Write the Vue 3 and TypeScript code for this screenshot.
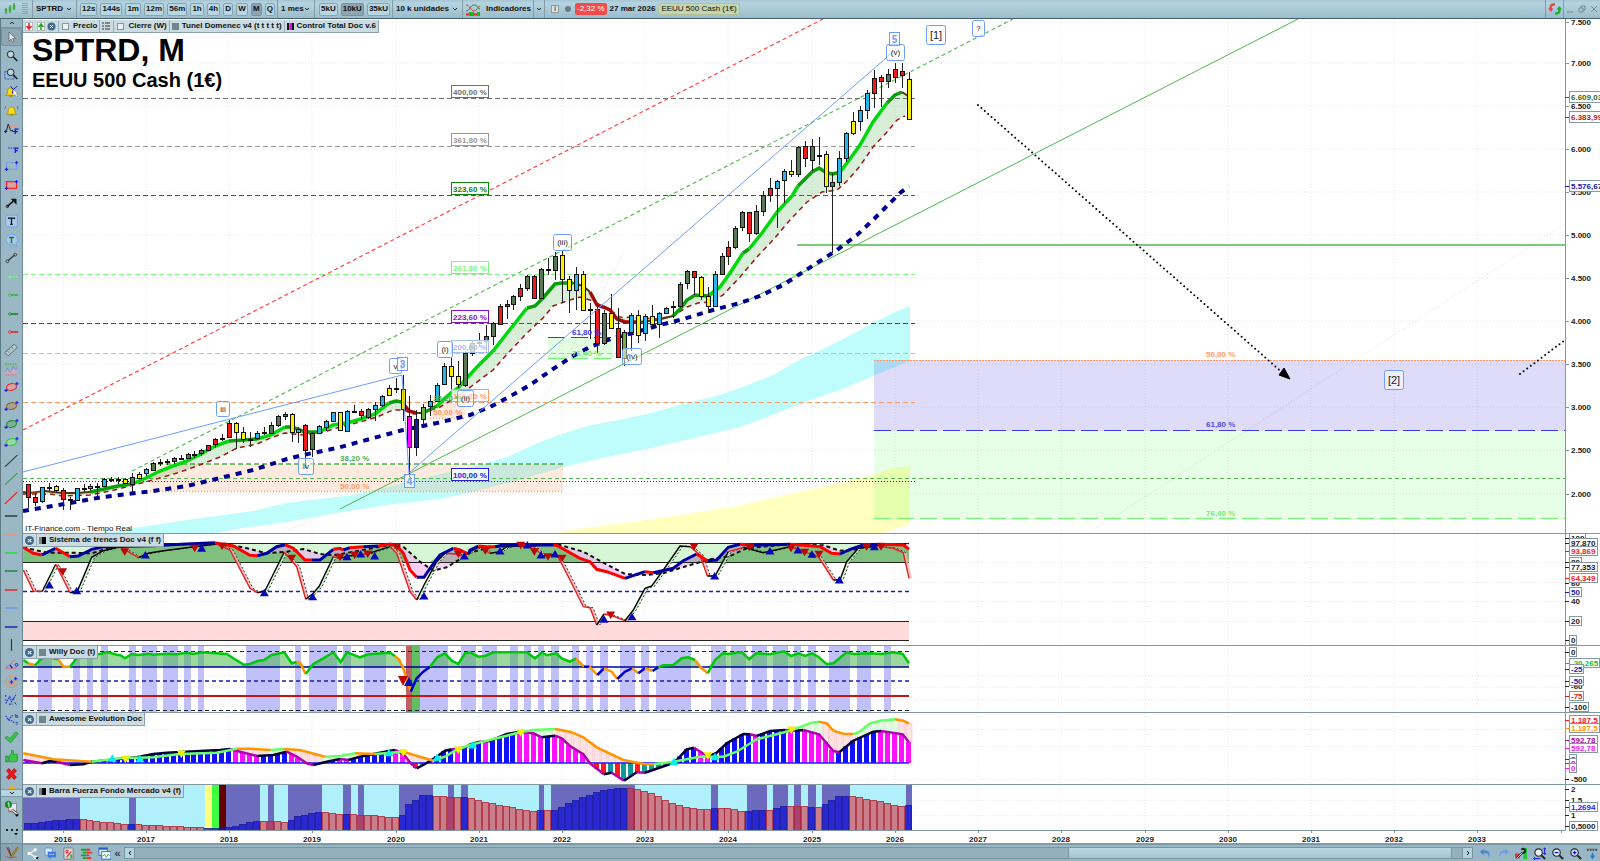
<script setup lang="ts">
type Point = { x: number; y: number; c: string }
type Run = { c: string; points: string }

const LEFT = 20
const TOP = 530
const monthX = (m: number): number => 62.7 + 6.935 * m
const priceY = (p: number): number => 63.4 + (7000 - p) * 0.08602

/* Series text: colour keys followed by "x,y" pairs. */
function parse(text: string): Point[] {
  const out: Point[] = []
  let c = 'k'
  for (const token of text.trim().split(/\s+/)) {
    if (!token.includes(',')) { c = token; continue }
    const [x, y] = token.split(',').map(Number)
    out.push({ x, y, c })
  }
  return out
}
/* Study panes are stored in thirds of a pixel, in two halves. */
function study(first: string, second: string): Point[] {
  const a = parse(first).map(p => ({ x: LEFT + p.x / 3, y: TOP + p.y / 3, c: p.c }))
  const b = parse(second).map(p => ({ x: LEFT + 450 + p.x / 3, y: TOP + p.y / 3, c: p.c }))
  return a.filter(p => p.x < b[0].x).concat(b)
}
const xy = (p: Point): string => `${p.x.toFixed(1)},${p.y.toFixed(1)}`
const path = (pts: Point[]): string => pts.map(xy).join(' ')
function runs(pts: Point[]): Run[] {
  const out: Run[] = []
  for (let i = 1; i < pts.length; i++) {
    const last = out[out.length - 1]
    if (last && last.c === pts[i].c) last.points += ' ' + xy(pts[i])
    else out.push({ c: pts[i].c, points: xy(pts[i - 1]) + ' ' + xy(pts[i]) })
  }
  return out
}
function at(pts: Point[], x: number): Point {
  for (let i = 1; i < pts.length; i++) {
    if (pts[i].x >= x) {
      const a = pts[i - 1], b = pts[i]
      const t = b.x === a.x ? 0 : Math.max(0, (x - a.x) / (b.x - a.x))
      return { x, y: a.y + (b.y - a.y) * t, c: b.c }
    }
  }
  const end = pts[pts.length - 1]
  return { x, y: end.y, c: end.c }
}
const area = (a: Point[], b: Point[]): string => path(a) + ' ' + path([...b].reverse())

/* ---- Price pane ---- */
const candleColors: Record<string, string> = {
  r: '#f01c1c', b: '#27b5ea', y: '#f8f000', g: '#587858', o: '#6fb043', m: '#ff00ff', n: '#1c1c9e', d: '#111111',
}
const candleText = `
r 484 497 484 508;r 497 502 493 506;b 487 501 487 503;d 487 487 483 491;y 486 490 485 493;
r 490 499 488 510;d 499 499 497 510;b 488 500 488 501;d 488 488 484 492;b 486 488 484 491;d 486 486 483 496;
b 479 486 478 487;d 479 479 477 482;d 479 479 477 484;y 479 483 478 484;g 477 484 473 492;y 474 478 472 479;
b 469 473 468 476;g 463 470 462 471;d 462 462 459 466;g 461 462 459 465;g 458 461 457 464;d 458 458 455 460;
g 454 458 453 459;d 454 454 451 458;g 450 453 449 456;r 445 450 445 450;r 439 444 438 448;r 438 439 434 441;
r 423 437 420 437;y 423 432 422 449;y 432 439 427 443;d 439 439 432 447;b 433 438 431 440;d 432 432 427 435;
g 425 433 422 434;g 416 425 415 427;r 414 416 412 420;y 414 432 413 442;b 429 432 427 443;r 425 450 424 468;
g 433 449 432 457;b 426 433 425 434;b 421 427 420 431;b 412 421 412 422;y 412 430 412 431;b 411 431 410 431;
d 411 411 405 413;r 411 415 409 420;g 409 417 408 419;b 405 409 402 421;b 396 405 395 407;y 388 395 385 396;
d 388 388 378 393;y 389 409 375 421;m 416 447 396 477;n 419 447 410 456;o 407 419 404 425;b 401 406 395 416;
b 385 401 383 402;b 366 384 363 385;y 366 376 358 389;y 376 384 361 388;g 353 385 351 387;g 343 353 340 356;
d 342 342 333 347;g 336 341 325 352;g 323 336 322 345;r 306 324 304 325;r 304 306 300 319;g 296 304 295 310;
r 288 296 284 301;g 276 288 275 291;r 276 298 275 298;g 269 298 268 298;d 269 269 258 275;g 256 270 252 280;
y 255 279 251 303;y 279 290 276 313;b 274 290 267 310;y 274 310 271 311;d 309 309 303 339;r 309 343 305 353;
g 313 343 310 345;y 313 328 294 329;r 328 357 308 358;o 332 358 330 366;b 315 332 313 351;y 315 335 310 343;
b 316 333 314 341;y 316 324 305 327;b 313 324 312 338;b 308 313 307 314;b 306 307 301 318;g 284 306 282 308;
g 271 283 270 289;r 271 277 271 295;y 277 296 276 300;y 296 306 287 313;b 274 306 271 307;g 256 274 253 275;
r 247 256 241 265;g 228 247 226 249;g 212 227 211 231;r 212 233 212 242;g 211 233 205 235;g 195 211 191 216;
r 188 195 178 202;b 181 188 180 228;b 171 180 169 203;y 171 174 160 177;g 147 174 146 177;r 146 158 141 167;
g 146 160 139 171;d 155 155 137 165;y 154 186 151 193;g 182 186 173 253;b 158 182 151 186;b 133 158 132 162;
y 121 133 112 135;b 110 121 106 131;b 93 110 90 119;r 78 93 70 108;r 77 81 75 107;g 74 81 69 88;
r 69 77 63 83;r 71 75 63 88;y 79 119 72 120`
const candles = candleText.split(';').map((row, i) => {
  const [c, top, bottom, high, low] = row.trim().split(' ')
  return { x: Math.round(monthX(i - 5)), top: +top, h: Math.max(1, +bottom - +top), high: +high, low: +low, fill: candleColors[c] }
})
const fast = parse(`d 23,492 29,493 w 45,491 d 62,493 77,493 90,492 g 104,489 118,486 132,484 b 146,478 160,471 173,466
 187,461 201,454 215,446 229,441 g 243,440 257,439 b 271,435 285,427 g 292,427 305,432 319,432 b 333,425 347,423
 361,419 375,414 389,403 g 396,401 402,402 r 409,411 416,413 d 423,413 g 437,406 b 444,399 451,393 458,388 465,380 478,366
 493,351 508,332 527,308 g 535,306 543,298 555,284 562,283 573,283 d 583,286 590,292 r 597,305 603,307 610,310 617,319 625,322
 640,322 d 657,320 673,316 g 680,309 687,300 695,295 708,296 b 720,287 730,273 743,253 g 749,249 b 762,233 777,212 792,196
 798,186 g 812,172 819,168 827,173 833,174 840,172 b 847,163 860,145 873,122 887,103 g 895,95 902,92 d 908,96`)
const slow = parse(`r 23,494 50,494 62,496 90,495 110,491 130,486 153,480 177,473 197,466 220,457 237,448 257,444 273,437
 285,433 303,435 320,433 340,427 360,422 377,417 393,410 403,410 413,414 425,412 440,407 460,395 473,385 493,370 510,351 527,333
 543,318 553,306 567,301 580,297 590,300 607,308 620,317 640,318 657,319 673,316 687,307 698,303 712,302 723,295 740,277 757,257
 773,240 790,220 807,202 822,192 837,190 847,181 860,166 873,147 887,132 897,120 905,116`)
const trend = parse(`n 23,511 70,503 103,497 153,491 187,486 220,478 253,470 287,459 303,455 337,448 370,439 403,430 437,423
 470,415 490,407 507,398 530,385 553,369 573,356 590,347 613,338 633,333 660,325 680,320 713,310 740,303 760,296 783,285 800,274
 820,261 837,250 857,235 873,220 890,203 900,193 909,186`)
const maColors: Record<string, string> = { b: '#00d80c', g: '#0a9e0a', d: '#4a3a0a', w: '#7c4a10', r: '#a00c0c' }

const levels = [
  { y: 98, text: '400,00 %', color: '#707070', dash: '5 3' },
  { y: 146, text: '361,80 %', color: '#999999', dash: '5 3' },
  { y: 195, text: '323,60 %', color: '#0c860c', dash: '5 3' },
  { y: 274, text: '261,80 %', color: '#7cf57c', dash: '5 3' },
  { y: 323, text: '223,60 %', color: '#8415b8', dash: '5 3' },
  { y: 353, text: '200,00 %', color: '#a9c0ef', dash: '5 3' },
  { y: 402, text: '161,80 %', color: '#ff9a66', dash: '5 3' },
  { y: 481, text: '100,00 %', color: '#2222dd', dash: '1 2' },
]
const smallTexts = [
  { x: 340, y: 461, text: '38,20 %', color: '#4caf4c' },
  { x: 340, y: 489, text: '50,00 %', color: '#ff9a66' },
  { x: 433, y: 401, text: '38,20 %', color: '#4caf4c' },
  { x: 433, y: 415, text: '50,00 %', color: '#ff9a66' },
  { x: 572, y: 335, text: '61,80 %', color: '#3c3ce0' },
  { x: 572, y: 356, text: '76,40 %', color: '#7be87b' },
  { x: 1206, y: 357, text: '50,00 %', color: '#ff9a66' },
  { x: 1206, y: 427, text: '61,80 %', color: '#5050d8' },
  { x: 1206, y: 516, text: '76,40 %', color: '#7be87b' },
]
const waves = [
  { x: 216, y: 401, w: 13, h: 15, text: 'iii' },
  { x: 298, y: 458, w: 15, h: 16, text: 'iv' },
  { x: 389, y: 358, w: 12, h: 15, text: 'v' },
  { x: 437, y: 341, w: 15, h: 16, text: '(i)' },
  { x: 457, y: 390, w: 16, h: 16, text: '(ii)' },
  { x: 553, y: 234, w: 18, h: 16, text: '(iii)' },
  { x: 622, y: 348, w: 19, h: 16, text: '(iv)' },
  { x: 886, y: 44, w: 18, h: 16, text: '(v)' },
  { x: 972, y: 20, w: 12, h: 16, text: '?' },
]
const bigWaves = [
  { x: 926, y: 25, w: 19, h: 19, text: '[1]' },
  { x: 1384, y: 370, w: 19, h: 19, text: '[2]' },
]
const squares = [
  { x: 397, y: 357, text: '3' },
  { x: 404, y: 474, text: '4' },
  { x: 889, y: 32, text: '5' },
]
const years = Array.from({ length: 18 }, (_, i) => ({ x: Math.round(monthX(i * 12)), text: String(2016 + i) }))
const prices = Array.from({ length: 12 }, (_, i) => {
  const p = 7500 - i * 500
  return { y: Math.max(22, Math.round(priceY(p))), text: `${Math.floor(p / 1000)}.${String(p % 1000).padStart(3, '0')}` }
})
const priceTags = [
  { y: 97, text: '6.609,03', color: '#2f6e1c' },
  { y: 117, text: '6.383,99', color: '#c01c1c' },
  { y: 186, text: '5.576,67', color: '#1414a8' },
]

/* ---- Sistema de trenes ---- */
const train = study(`r 10,52 40,70 65,75 b 80,68 107,55 r 150,80 b 175,78 215,58 250,50 400,47 500,42 585,38 r 600,42 640,48 690,76 712,77
 b 740,70 770,50 795,44 r 820,55 855,90 875,90 b 900,90 940,58 r 960,55 970,60 b 990,53 r 1030,50 b 1075,48 r 1110,42 1130,47 1150,70 1170,120 1190,142
 b 1212,142 1230,115 1260,75 1300,55 r 1320,60 1345,72`,
`b 0,60 25,48 r 50,50 75,50 b 100,45 150,45 r 180,45 b 250,45 r 262,47 330,85 360,95 380,118 410,125 465,145 b 525,125 r 550,128 b 610,115 640,92
 680,72 r 712,92 b 740,90 775,52 810,43 r 850,46 b 960,43 r 1000,46 1050,50 1085,70 1110,72 b 1140,58 1180,45 r 1200,44 b 1230,43 r 1300,45 1317,58`)
const trainSlow = study(`10,52 80,68 150,68 215,70 300,45 600,42 670,52 740,70 800,65 850,57 900,72 940,76 1000,65 1110,45 1150,50 1200,95 1240,122 1280,112 1340,75`,
`0,68 60,52 200,45 270,45 340,65 400,98 465,132 525,135 580,130 650,108 720,88 780,78 830,55 960,42 1060,46 1110,62 1150,60 1200,45 1317,42`)
const quick = study(`r 10,120 40,183 67,184 k 107,103 r 150,188 k 172,184 215,82 250,62 300,50 r 355,83 k 385,70 430,62 540,48 590,42 r 630,60 690,175 712,188
 k 735,182 793,66 r 830,110 857,208 k 880,190 898,168 940,80 r 960,85 k 1000,75 r 1040,72 k 1110,50 r 1130,70 1170,185 1190,210 k 1212,165 1250,95 1275,70 r 1310,72 1330,80`,
`k 0,65 30,50 r 60,70 k 90,65 110,50 150,47 r 190,50 220,78 k 250,74 r 265,82 300,150 340,230 360,233 380,285 k 402,252 r 420,255 465,272
 k 490,240 525,175 545,168 580,120 630,48 660,50 r 690,75 712,138 k 735,138 775,65 r 820,52 k 880,68 960,50 r 1000,65 1045,80 1090,150 k 1110,150 1130,95 1165,55 1220,48
 r 1270,55 1300,68 1317,145`)
const lagged = quick.map(p => ({ x: p.x + 3, y: p.y, c: p.c })).filter(p => p.x < 909)
const quickFills = quick.slice(1).map((p, i) => {
  const a = quick[i]
  return { c: p.c, points: `${a.x},${a.y} ${p.x},${p.y} ${p.x + 3},${p.y} ${a.x + 3},${a.y}` }
})
const trainBase = path(train.map(p => ({ ...p, y: Math.min(p.y, 562) }))) + ' 909,562 23,562'
const trainGap = area(train, trainSlow)
const trainColors: Record<string, string> = { r: '#ff0000', b: '#0000a0', k: '#000000' }
const marks = (first: string, second: string) => study(first, second)
const trainUps = marks('88,165 170,182 376,75 545,55 733,188 878,200 981,80 1022,72 1064,78 1212,198 1333,78',
  '90,63 172,45 213,75 255,72 402,268 486,260 734,138 900,63 984,60 1026,73 1108,150 1213,50')
const trainDowns = marks('128,125 314,65 524,55 606,48 815,85 960,82 1004,75 1043,72 1130,50 1315,72',
  '46,62 152,46 193,65 234,80 276,85 422,255 672,50 838,52 963,55 1004,67 1047,73 1190,50 1233,50')
const up = (p: Point): string => `${p.x - 4.5},${p.y + 3.5} ${p.x + 4.5},${p.y + 3.5} ${p.x},${p.y - 4}`
const down = (p: Point): string => `${p.x - 4.5},${p.y - 3.5} ${p.x + 4.5},${p.y - 3.5} ${p.x},${p.y + 4}`

/* ---- Willy ---- */
function spans(first: string, second: string) {
  const conv = (s: string, off: number) => s.split(' ').map(t => {
    const parts = t.split('-')
    const a = LEFT + off + +parts[0] / 3, b = LEFT + off + +parts[1] / 3
    return { x: Math.round(a), w: Math.round(b) - Math.round(a), c: parts[2] ?? 'p' }
  })
  return conv(first, 0).concat(conv(second, 450))
}
const willySpans = spans(
  '54-96 158-180 201-219 243-264 326-348 366-411 429-474 491-513 534-552 679-781 825-843 867-952 969-992 1032-1097 1158-1177-r 1177-1200-g 1200-1285 1323-1368',
  '36-81 120-144 161-183 204-222 243-267 306-328 348-369 390-413 450-496 513-536 557-662 723-768 783-828 846-891 909-954 972-993 1015-1038 1077-1140 1161-1203 1242-1263')
const spanColors: Record<string, string> = { p: '#c0c0fb', r: '#c16060', g: '#62be62' }
const willy = study(`g 10,390 25,400 o 45,406 g 60,390 80,378 100,385 115,388 o 130,410 150,410 g 170,385 200,373 240,372 262,366 290,374 300,375 315,385 335,372 355,375 385,371 400,374
 440,371 470,373 500,368 520,372 545,367 620,372 640,385 672,404 690,402 712,393 732,390 755,375 793,367 815,400 830,396 o 840,398 857,432 g 880,402 910,385 940,367 962,396 981,367
 1020,382 1045,373 1110,368 1125,378 o 1138,390 1150,415 1172,485 b 1190,445 1210,425 1230,410 g 1252,382 1275,370 1295,392 1315,402 1335,370`,
`g 0,367 25,380 45,378 70,367 170,367 195,385 215,368 232,376 258,370 275,385 300,395 318,385 o 342,410 b 358,410 o 382,435 b 402,415 o 425,425 442,447 b 465,425 486,415 o 505,430 b 525,415
 o 548,423 b 565,412 g 580,406 610,405 635,385 655,382 675,390 o 692,412 713,430 g 735,390 758,370 775,372 815,366 838,388 858,370 900,373 942,364 963,378 985,370 1005,378 1026,370
 1045,380 1070,403 1090,400 1130,367 1150,372 1200,370 1233,372 1270,367 1298,372 1317,400`)
const willyFill = path(willy.map(p => ({ ...p, y: Math.min(p.y, 667) }))) + ' 909,667 23,667'
const willyColors: Record<string, string> = { g: '#00c80c', o: '#ff9600', b: '#0000c8' }

/* ---- Awesome ---- */
const ZERO = 763
const osc = study(`m 10,690 65,700 k 90,693 110,695 m 150,705 k 190,703 215,695 350,682 400,672 440,668 600,660 630,657 m 660,665 712,678 k 760,675 800,665 m 830,680 860,700 880,705
 k 920,695 960,687 m 985,690 k 1020,680 1110,662 1125,660 m 1150,672 1172,700 1190,715 k 1215,702 1250,680 1275,662 1295,658 m 1318,656 k 1340,650`,
`k 0,643 30,635 m 55,635 k 110,612 150,605 m 190,610 215,622 k 255,617 m 275,625 300,648 340,673 360,700 402,733 k 425,728 m 462,752 k 500,727 m 525,728 k 600,702 620,690 650,658
 672,653 m 715,680 k 740,668 770,640 820,612 840,613 m 860,618 k 900,603 945,600 m 975,602 k 1000,600 m 1047,613 1090,663 1108,667 k 1150,632 1210,605 1233,603 m 1298,613 1317,637`)
const signal = study(`o 10,670 100,688 215,695 g 300,685 400,682 480,672 590,668 650,656 o 690,656 752,660 g 790,657 o 840,660 915,680 g 960,678 1005,670 o 1065,672 g 1150,665 o 1172,672 1240,692
 g 1275,680 1305,662`,
`g 0,645 80,625 150,607 190,600 255,597 o 300,605 340,622 380,652 460,690 525,703 550,703 g 610,695 690,680 760,680 800,665 860,628 960,602 1025,578 1047,575 o 1070,580 1090,602 1120,611 1150,612 g 1165,608 1200,580
 1230,572 1275,568 o 1300,572 1317,580`)
const oscColors: Record<string, string> = { m: '#b000b0', k: '#000038', o: '#ff9600', g: '#66ff66' }
const bars = Array.from({ length: 128 }, (_, i) => {
  const x = monthX(i - 5)
  const a = at(osc, x), s = at(signal, x)
  const below = a.y > ZERO
  const fill = below ? (a.c === 'k' ? '#109a9a' : '#ff1c1c') : a.c === 'k' ? '#1010ff' : '#ff10ff'
  const limit = Math.min(a.y, ZERO)
  return {
    x: Math.round(x) - 3, y: Math.min(a.y, ZERO), h: Math.abs(ZERO - a.y), fill,
    gapY: s.y, gapH: Math.max(0, limit - s.y), gapFill: s.c === 'g' ? '#e2fbe2' : '#ffe2e2', gapLine: s.c === 'g' ? '#b4f0b4' : '#f4b4b4',
  }
})
const oscDowns = marks('316,688 484,672 1150,668 1315,660', '152,608 714,677 964,600')
const oscUps = marks('277,685 360,686 1107,668 1252,682', '8,645 612,695 735,680')

/* ---- Barra Fuerza ---- */
const forceSpans = spans(
  '9-181 326-348 555-575-y 575-597-g 597-618-d 618-721 744-761 804-907 970-993 1015-1032 1138-1239 1285-1303 1323-1344',
  '207-222 243-496 723-744 831-891 909-954 972-993 1015-1038 1056-1140 1308-1326')
const forceColors: Record<string, string> = { p: '#6c6abf', y: '#ffff80', g: '#40ff40', d: '#660000' }
const force = study(`b 24,880 150,867 180,867 r 190,868 325,882 b 345,882 r 560,893 b 600,895 628,892 712,872 r 760,872 804,876 b 835,858 906,845 r 940,850 970,852 b 993,852 r 1060,856 1138,862
 b 1150,852 1170,820 1212,795 1239,795 r 1280,800 1323,800 b 1340,800 r 1349,802`,
`r 0,803 60,818 120,830 180,842 202,842 b 222,841 r 243,841 b 260,838 300,818 340,800 400,780 465,773 472,773 r 490,773 550,790 600,815 650,830 700,837 722,836 b 744,835 r 775,835 826,843
 b 890,840 r 909,838 b 945,828 r 1000,828 1014,829 b 1038,831 r 1056,830 b 1070,820 1105,797 1140,797 r 1230,812 1305,832 b 1317,826`)
const forceBars = Array.from({ length: 128 }, (_, i) => {
  const x = monthX(i - 5)
  const p = at(force, x)
  return { x: Math.round(x) - 4, y: Math.round(p.y), c: p.c }
})

const studyTags = [
  [
    { y: 538, text: '100', color: '#222222', box: true }, { y: 543, text: '97,870', color: '#222222', box: true },
    { y: 562, text: '80', color: '#222222', box: true }, { y: 551, text: '93,869', color: '#f01c1c', box: true },
    { y: 567, text: '77,353', color: '#222222', box: true }, { y: 583, text: '60', color: '#222222', box: false },
    { y: 578, text: '64,349', color: '#f01c1c', box: true }, { y: 592, text: '50', color: '#1c1ca8', box: true },
    { y: 601, text: '40', color: '#222222', box: false }, { y: 621, text: '20', color: '#222222', box: true },
    { y: 640, text: '0', color: '#222222', box: true },
  ],
  [
    { y: 652, text: '0', color: '#222222', box: true }, { y: 663, text: '-20,265', color: '#14c414', box: true },
    { y: 669, text: '-25', color: '#1c1ca8', box: true }, { y: 686, text: '-60', color: '#222222', box: false },
    { y: 681, text: '-50', color: '#1c1ca8', box: true }, { y: 696, text: '-75', color: '#d01c1c', box: true },
    { y: 707, text: '-100', color: '#222222', box: true },
  ],
  [
    { y: 720, text: '1.187,5', color: '#f01c1c', box: true }, { y: 728, text: '1.187,5', color: '#ff9600', box: true },
    { y: 740, text: '592,78', color: '#a010a0', box: true }, { y: 748, text: '592,78', color: '#f020f0', box: true },
    { y: 759, text: '0', color: '#1c1cff', box: true }, { y: 763, text: '0', color: '#c010c0', box: true },
    { y: 768, text: '0', color: '#f020f0', box: true }, { y: 779, text: '-500', color: '#222222', box: false },
  ],
  [
    { y: 789, text: '2', color: '#222222', box: false }, { y: 800, text: '1,5', color: '#222222', box: false },
    { y: 815, text: '1', color: '#222222', box: false }, { y: 807, text: '1,2694', color: '#1c1cff', box: true },
    { y: 826, text: '0,5000', color: '#222222', box: true },
  ],
]
const tagWidth = (t: string): number => Math.round(3 + t.replace(/[.,-]/g, '').length * 4.4 + t.replace(/[^.,-]/g, '').length * 2.5)

/* ---- Toolbars ---- */
const frames = ['12s', '144s', '1m', '12m', '56m', '1h', '4h', 'D', 'W', 'M', 'Q']
const sizes = ['5kU', '10kU', '35kU']

const hline = (c: string): string => `<path d="M1 8H16" stroke="${c}" stroke-width="1.5"/>`
const diag = (c: string): string => `<path d="M1 15L16 1" stroke="${c}" stroke-width="1.3"/>`
const ray = (c: string): string => `<path d="M8 8H17" stroke="${c}" stroke-width="1.8"/><circle cx="7" cy="8" r="1.5" fill="#b9d3dd" stroke="${c}"/>`
const plus = (x: number, y: number): string => `<path d="M${x - 2} ${y}h4M${x} ${y - 2}v4" stroke="#1a1af0" stroke-width="1.3"/>`
const oval = (s: string, f: string): string => `<ellipse cx="9" cy="8" rx="6" ry="4" fill="${f}" stroke="${s}" stroke-width="1.2" transform="rotate(-8 9 8)"/>${plus(2.5, 12)}${plus(15.5, 4)}`
const lens = `<circle cx="8" cy="6" r="4" fill="#b9d6e2" stroke="#222" stroke-width="1.2"/><path d="M11 9l5 5" stroke="#222" stroke-width="2"/>`
const bell = `<path d="M2 12h12l-2-2.500V7c0-5-8-5-8 0v2.500z" fill="#f4dc10" stroke="#937500" stroke-width=".7"/><circle cx="8" cy="13" r="1.3" fill="#b08a00"/>`
const tools: { name: string; art: string }[] = [
  { name: 'Puntero', art: '<path d="M6 2v11l2.500-2.500 1.800 4 1.800-.8-1.800-3.800H14z" fill="#e4e8ea" stroke="#555" stroke-width=".8"/>' },
  { name: 'Lupa', art: lens },
  { name: 'Zoom de zona', art: `<path d="M1 5h5M1 5v9h11v-3" fill="none" stroke="#1b4fe0" stroke-dasharray="2 1"/>${lens}` },
  { name: 'Alerta con puntero', art: `${bell}<path d="M8 1l3 4 5-4M11 5l-1 5" fill="none" stroke="#1212d8" stroke-width="1.1"/><path d="M11 5v8l2-2 2 3 1-1-1-3h2z" fill="#fff" stroke="#666" stroke-width=".5"/>` },
  { name: 'Alerta', art: `<g transform="translate(1 0)">${bell}</g><path d="M2 2l-1 4M16 2l1 4" stroke="#555" stroke-width=".8"/>` },
  { name: 'Fibonacci abc', art: '<path d="M1 11l2-1 2-8 3 8h3" fill="none" stroke="#111"/><path d="M7 5h9" stroke="#ef8e66"/><path d="M0 11h4M2 9v4M10 11h4" stroke="#11e" stroke-width="1.2"/><path d="M13.500 14V8h4M13.500 11h3" fill="none" stroke="#11e" stroke-width="1.500"/>' },
  { name: 'Fibonacci', art: '<path d="M5 5h10" stroke="#ef8e66" stroke-dasharray="2 1"/><path d="M5 8h9" stroke="#11e" stroke-dasharray="2 1"/><path d="M13.500 14V8h4M13.500 11h3" fill="none" stroke="#11e" stroke-width="1.500"/>' },
  { name: 'Rectángulo azul', art: `<rect x="3" y="4" width="12" height="8" stroke="#6d9df0"/>${plus(3, 12)}${plus(15, 4)}` },
  { name: 'Rectángulo rojo', art: `<rect x="3" y="4" width="12" height="8" fill="#d7a3a8" stroke="#f02020" stroke-width="1.4"/>${plus(3, 12)}${plus(15, 4)}` },
  { name: 'Flecha', art: '<path d="M4 12l8-7" stroke="#111" stroke-width="1.800"/><path d="M8 3h7v7z" fill="#111"/><circle cx="4" cy="12" r="1.500" fill="none" stroke="#111"/>' },
  { name: 'Texto', art: '<rect x="2" y="1" width="14" height="14" rx="2" fill="#a9c9ea" stroke="#6d9df0"/><path d="M5.500 5.500V4.500h7v1M9 4.500V12M7.500 12h3" fill="none" stroke="#111" stroke-width="1.600"/>' },
  { name: 'Nota', art: '<path d="M9 1a7 6.500 0 1 0 3 12.500l3 2-.5-3.500A7 6.500 0 0 0 9 1z" fill="#a9c9ea" stroke="#6d9df0"/><path d="M6 5h6M9 5v6M8 11h2" fill="none" stroke="#158015" stroke-width="1.600"/>' },
  { name: 'Segmento', art: '<path d="M4 12l9-8" stroke="#333" stroke-width="1.500"/><circle cx="4" cy="12" r="1.700" fill="#9bb" stroke="#333"/><circle cx="13.500" cy="4" r="1.700" fill="#9bb" stroke="#333"/>' },
  { name: 'Semirrecta clara', art: ray('#72ef72') },
  { name: 'Semirrecta verde', art: ray('#2fb22f') },
  { name: 'Semirrecta oscura', art: ray('#0d7f0d') },
  { name: 'Semirrecta roja', art: ray('#f01414') },
  { name: 'Regla', art: '<path d="M1 11L12 1l4 4L5 15z" fill="#b8c8d0" stroke="#4c5f68"/><path d="M4 9l2 2M6.500 7l1.500 1.500M9 4.500l2 2" stroke="#4c5f68"/>' },
  { name: 'Canal', art: '<rect x="1" y="2" width="15" height="5" fill="#93b8a5"/><rect x="1" y="9" width="15" height="6" fill="#c1aebc"/><path d="M1 12l3-5 3 5 4-7 3 4 2-4" fill="none" stroke="#6b8ae0"/><path d="M1 2h15" stroke="#30a050" stroke-dasharray="2 1"/><path d="M1 15h15" stroke="#e06070" stroke-dasharray="2 1"/>' },
  { name: 'Elipse roja', art: oval('#f02020', '#d7a3a8') },
  { name: 'Elipse marrón', art: oval('#8a5a24', '#aaa28e') },
  { name: 'Elipse verde', art: oval('#118a22', '#7fb096') },
  { name: 'Elipse clara', art: oval('#22cc33', '#96d8a8') },
  { name: 'Recta gris', art: diag('#2b3a44') },
  { name: 'Recta verde', art: diag('#2fa53a') },
  { name: 'Recta roja', art: diag('#f01414') },
  { name: 'Horizontal negra', art: hline('#222') },
  { name: 'Horizontal naranja', art: hline('#ff8d66') },
  { name: 'Horizontal lima', art: hline('#00ef10') },
  { name: 'Horizontal verde', art: hline('#0a7d1a') },
  { name: 'Horizontal roja', art: hline('#ee1111') },
  { name: 'Horizontal azul', art: hline('#5f92f5') },
  { name: 'Horizontal marino', art: hline('#0808a8') },
  { name: 'Vertical', art: '<path d="M9 1v14" stroke="#333" stroke-width="1.400"/>' },
  { name: 'Ángulo', art: '<path d="M2 13L13 3M2 13h13" stroke="#f05060" fill="none"/><path d="M7 9l3 4" stroke="#11e" stroke-width="1.500"/><circle cx="15" cy="9" r="1.700" fill="none" stroke="#11e"/>' },
  { name: 'Ciclo', art: `<circle cx="9" cy="8" r="7" fill="none" stroke="#ee8a4a"/><circle cx="9" cy="8" r="3.500" fill="none" stroke="#ee8a4a"/>${plus(9, 8)}${plus(14, 4)}` },
  { name: 'Ondas de Elliott', art: '<path d="M2 12L7 4l2 6 5-8M2 2v3M10 7h3M11.500 5.500v3M6 13h4M13 11l2 3M1 8h3" stroke="#1b35dc" fill="none" stroke-dasharray="2 1" stroke-width="1.400"/>' },
  { name: 'Onda abc', art: '<path d="M2 4l3 5 4 1 4 3M5 9l6-6" stroke="#1b35dc" fill="none" stroke-dasharray="2 1" stroke-width="1.300"/><path d="M14 2v4h2.500V4H14M14 14h2.500M14 12h2.500" stroke="#1b35dc" fill="none"/>' },
  { name: 'Correcto', art: '<path d="M1 9l3-2 3 3 7-8 3 2-9 11z" fill="#38c748" stroke="#1b8b2b" stroke-width=".8"/>' },
  { name: 'Me gusta', art: '<path d="M2 8h3v7H2zM6 8l3-3V1c3 0 3 3 2 5h5v8l-2 1H6z" fill="#38c748" stroke="#1b8b2b" stroke-width=".8"/>' },
  { name: 'Borrar', art: '<path d="M3 4l3-2.500 3 3.500 3-3.500L15 4l-3.500 4 3.500 4-3 2.500-3-3.500-3 3.500L3 12l3.500-4z" fill="#f01414" stroke="#9c0c0c" stroke-width=".8"/>' },
]

const lensPlain = '<circle cx="6" cy="6" r="4" fill="#e8f0f4" stroke="#222" stroke-width="1.200"/><path d="M9 9l4 4" stroke="#222" stroke-width="2.200"/>'
const leftFoot = [
  { name: 'Compartir', art: '<path d="M4 7l6-4M4 7l6 4" stroke="#f2f6f8" stroke-width="1.500"/><circle cx="3.500" cy="7" r="2" fill="#f2f6f8"/><circle cx="10" cy="3" r="1.800" fill="#f2f6f8"/><circle cx="10" cy="11" r="1.800" fill="#f2f6f8"/><path d="M10 11h4l-2 2.500z" fill="#111"/>' },
  { name: 'Chat', art: '<rect x="1" y="1" width="8" height="8" rx="1.500" fill="#d7e4f7" stroke="#5c8ce0"/><path d="M4 5h9v6H8l-2 2.500V11H4z" fill="#3d7ae0"/><path d="M6 8h5" stroke="#fff" stroke-dasharray="1 1"/>' },
  { name: 'Informe', art: '<rect x="2" y="1" width="10" height="12" rx="1" fill="#d7d7d7" stroke="#777"/><path d="M4 4h3M4 6h3" stroke="#e03030" stroke-width="1.500"/><path d="M5 11l5-6" stroke="#c33" stroke-width="1.300"/><path d="M9 8h2v4H9z" fill="#26b243"/>' },
  { name: 'Libro de órdenes', art: '<path d="M1 3h6M3 6h4M1 9h6M3 12h4" stroke="#10a830" stroke-width="2"/><path d="M7 3h4M7 6h6M7 9h3M7 12h5" stroke="#e83030" stroke-width="2"/>' },
  { name: 'Ventanas', art: '<rect x="1" y="1" width="9" height="8" fill="#e8f2fb" stroke="#2c63c8"/><path d="M1 2h9" stroke="#2c63c8" stroke-width="2"/><rect x="4" y="5" width="10" height="8" fill="#fff" stroke="#2c63c8"/><path d="M5 10l2-2 2 3 2-3 2 1" stroke="#2a9c3a" fill="none"/>' },
]
const rightFoot = [
  { name: 'Deshacer', art: '<path d="M5 2L1 5.500 5 9V6.500c4-.5 6 1 5 5 3-4 1-8-5-8z" fill="#4a86d0"/>' },
  { name: 'Rehacer', art: '<path d="M9 2l4 3.500L9 9V6.500c-4-.5-6 1-5 5-3-4-1-8 5-8z" fill="#6ba3da"/>' },
  { name: 'Configurar', art: '<rect x="9" y="1" width="4" height="12" fill="#22c43a"/><rect x="0" y="7" width="5" height="5" fill="#d83a3a"/><path d="M2 12l6-6M7 3c1-2 4-1 4 1s-2 3-4 2" stroke="#222" stroke-width="2" fill="none"/><path d="M2 12l6-6" stroke="#ddd"/>' },
  { name: 'Ajustar zoom', art: `${lensPlain}<path d="M12.500 1v7M11 2.500L12.500 1 14 2.500M11 6.500L12.500 8 14 6.500M1 12.500h7M2 11l-1.500 1.500L2 14" fill="none" stroke="#11e"/>` },
  { name: 'Alejar', art: `${lensPlain}<path d="M4 6h4" stroke="#11e" stroke-width="1.500"/>` },
  { name: 'Acercar', art: `${lensPlain}<path d="M4 6h4M6 4v4" stroke="#11e" stroke-width="1.500"/>` },
  { name: 'Más', art: '<path d="M1 3h12" stroke="#444" stroke-width="2" stroke-dasharray="2 1"/><path d="M7 6v6M5 9l2 3 2-3" fill="none" stroke="#2878c8" stroke-width="1.500"/>' },
]
</script>

<template>
  <div class="platform">
    <header class="topbar">
      <button class="icon-btn logo" aria-label="Gráfico">
        <svg width="12" height="12" viewBox="0 0 12 12"><path d="M2 5v6M6 2v8M10 0v7" stroke="#228a22" stroke-width="1" /><path d="M2 6v3M6 4v4M10 2v4" stroke="#34b234" stroke-width="2.500" /></svg>
      </button>
      <svg class="grip" width="6" height="12" viewBox="0 0 6 12"><path d="M1 0v12M3 0v12M5 0v12" stroke="#667d88" stroke-dasharray="1 1" /></svg>
      <button class="drop symbol">SPTRD <svg class="chev" viewBox="0 0 6 4"><path d="M1 1l2 2 2-2" /></svg></button>
      <div class="group times">
        <button v-for="f in frames" :key="f" class="chip" :class="{ on: f === 'M' }">{{ f }}</button>
      </div>
      <button class="drop month">1 mes <svg class="chev" viewBox="0 0 6 4"><path d="M1 1l2 2 2-2" /></svg></button>
      <div class="group units">
        <button v-for="s in sizes" :key="s" class="chip" :class="{ on: s === '10kU' }">{{ s }}</button>
      </div>
      <button class="drop amount">10 k unidades <svg class="chev" viewBox="0 0 6 4"><path d="M1 1l2 2 2-2" /></svg></button>
      <button class="drop indicators">
        <svg width="14" height="13" viewBox="0 0 14 13"><path d="M0 8C4 8 4 2 8 2s3 4 6 4" fill="none" stroke="#2a8a3a" /><path d="M0 2c4 0 5 6 8 6s3-4 6-5" fill="none" stroke="#e04848" /><path d="M0 11.500h3M8 11.500h3" stroke="#e22" stroke-width="2" /><path d="M3 11h5M11 11h3" stroke="#18b818" stroke-width="4" /></svg>
        Indicadores
      </button>
      <button class="drop more" aria-label="Más indicadores"><svg class="chev" viewBox="0 0 6 4"><path d="M1 1l2 2 2-2" /></svg></button>
      <div class="status">
        <button class="info">i</button>
        <span class="dot"></span>
        <span class="change">-2,32 %</span>
        <span class="date">27 mar 2026</span>
        <span class="product">EEUU 500 Cash (1€)</span>
      </div>
      <button class="drop sync" aria-label="Sincronizar">
        <svg width="14" height="12" viewBox="0 0 14 12"><path d="M7 1.500C3 1 2.500 3 2.500 6" fill="none" stroke="#f04444" stroke-width="2.500" /><path d="M0 5.500h5.500L3 9z" fill="#f04444" /><path d="M7 10.500c4 .5 4.500-1.500 4.500-4.500" fill="none" stroke="#18b428" stroke-width="2.500" /><path d="M8.500 6.500H14L11.500 3z" fill="#18b428" /></svg>
      </button>
      <div class="window">
        <button aria-label="Minimizar"><svg viewBox="0 0 8 8"><path d="M1 7h6" /></svg></button>
        <button aria-label="Restaurar"><svg viewBox="0 0 8 8"><path d="M1 3h4v4H1zM3 3V1h4v4H5" /></svg></button>
        <button aria-label="Cerrar"><svg viewBox="0 0 8 8"><path d="M1 1l6 6M7 1L1 7" /></svg></button>
      </div>
    </header>

    <aside class="sidebar">
      <button class="scroll" aria-label="Subir"><svg class="chev" viewBox="0 0 6 4"><path d="M1 3l2-2 2 2" /></svg></button>
      <div class="tools">
        <button v-for="(t, i) in tools" :key="t.name" class="tool" :class="{ picked: i === 0 }" :aria-label="t.name">
          <svg width="15" height="14" viewBox="0 0 18 16" fill="none" v-html="t.art"></svg>
        </button>
      </div>
      <div class="peek"><svg width="14" height="14" viewBox="0 0 14 14"><path d="M7 1l2 4 4 1-3 3 1 4-4-2-4 2 1-4-3-3 4-1z" fill="#f0b020" /></svg></div>
      <button class="scroll down" aria-label="Bajar"><svg class="chev" viewBox="0 0 6 4"><path d="M1 1l2 2 2-2" /></svg></button>
      <button class="tool tall" aria-label="Configuración">
        <svg width="16" height="16" viewBox="0 0 18 18"><rect x="5" y="3" width="9" height="9" fill="#e2eaee" stroke="#888" /><circle cx="5" cy="4" r="4" fill="#138a1e" /><path d="M4 3l1.500-1v5" stroke="#fff" fill="none" /><path d="M5 9l3 3M6 12h5" stroke="#d44" /><path d="M9 10l6 5" stroke="#333" stroke-width="3" /><path d="M9 10l6 5" stroke="#eee" stroke-width="1.500" /><path d="M12 15h5l-2.500 3z" fill="#111" /></svg>
      </button>
      <button class="tool tall" aria-label="Opciones">
        <svg width="14" height="8" viewBox="0 0 14 8"><path d="M1 2h2M6 2h2M11 2h2" stroke="#222" stroke-width="2" /><path d="M9 5h4l-2 2.500z" fill="#111" /></svg>
      </button>
      <button class="tool pencil" aria-label="Dibujar">
        <svg width="14" height="13" viewBox="0 0 16 14"><path d="M2 1l5 10" stroke="#b33" stroke-width="1.500" /><path d="M4 1l3 10" stroke="#444" /><path d="M14 1L7 11l-1 2 2-1 7-10z" fill="#f0c030" stroke="#7a5a10" /><path d="M1 12l6 1 6-1" stroke="#c44" fill="none" /></svg>
      </button>
    </aside>

    <main class="work">
      <section class="pane price">
        <svg class="plot" viewBox="23 19 1577 515" preserveAspectRatio="none">
          <g class="gridlines">
            <line v-for="y in years" :key="y.text" :x1="y.x" :x2="y.x" y1="19" y2="533" />
            <line v-for="p in prices" :key="p.text" x1="23" x2="1565" :y1="p.y" :y2="p.y" />
          </g>
          <g fill="none" stroke="#dddddd" stroke-dasharray="1 2">
            <path d="M1092 531L1565 224M283 533L500 432L548 392L624 252" />
          </g>
          <polygon fill="#bffdfd" points="102,533 187,520 253,511 287,503 353,495 387,487 440,474 473,467 507,457 540,442 562,434 587,426 613,421 647,414 687,403 717,396 740,388 773,375 803,358 827,347 853,334 873,323 893,313 910,306 910,361 873,376 840,390 807,401 773,415 740,427 690,439 647,449 607,457 567,466 523,479 473,492 440,499 387,505 337,513 287,522 237,529 217,533" />
          <polygon fill="#ffffbe" points="555,533 578,529 640,521 693,513 733,507 790,494 840,483 873,475 893,468 910,466 910,524 883,533" />
          <rect x="150" y="464" width="413" height="27" fill="#ff8c50" opacity=".18" />
          <rect x="430" y="403" width="35" height="15" fill="#ff8c50" opacity=".18" />
          <rect x="548" y="338" width="65" height="20" fill="#50f050" opacity=".16" />
          <rect x="874" y="360" width="691" height="71" fill="#5046dc" opacity=".19" />
          <rect x="874" y="431" width="691" height="88" fill="#50ff50" opacity=".14" />
          <g fill="none">
            <path d="M150 464H563" stroke="#4caf4c" stroke-width="1.500" stroke-dasharray="5 3" />
            <path d="M150 491.500H563M430 418.500H465" stroke="#ff9a66" stroke-dasharray="1 2" stroke-width="1.500" />
            <path d="M23 478.500H1565" stroke="#58b858" stroke-dasharray="4 3" />
            <path d="M874 360.500H1565" stroke="#ff9a66" stroke-dasharray="2 1" />
            <path d="M874 430.500H1565M548 337.500H625" stroke="#3c3ce0" stroke-dasharray="17 6" />
            <path d="M874 518.500H1565M548 358.500H613" stroke="#7cf57c" stroke-dasharray="17 6" stroke-width="1.500" />
            <path d="M23 430L823 19" stroke="#ff4444" stroke-dasharray="4 3" stroke-width="1.200" />
            <path d="M132 471L622 220L1013 19" stroke="#58bc58" stroke-dasharray="4 3" stroke-width="1.200" />
            <path d="M340 509L1298 19" stroke="#4cba4c" />
            <path d="M797 245H1565" stroke="#4cba4c" stroke-width="1.500" />
          </g>
          <line v-for="l in levels" :key="l.text" x1="23" x2="915" :y1="l.y + 0.5" :y2="l.y + 0.5" :stroke="l.color" :stroke-dasharray="l.dash" />
          <polygon :points="area(fast, slow)" fill="#28a028" opacity=".18" />
          <polyline :points="path(slow)" fill="none" stroke="#a01414" stroke-width="1.500" stroke-dasharray="5 4" />
          <polyline :points="path(trend)" fill="none" stroke="#000090" stroke-width="4" stroke-dasharray="6 6" />
          <polyline v-for="(r, i) in runs(fast)" :key="i" :points="r.points" fill="none" :stroke="maColors[r.c]" :stroke-width="r.c === 'd' || r.c === 'w' ? 2 : 3.5" />
          <g v-for="(c, i) in candles" :key="i">
            <line :x1="c.x + 0.5" :x2="c.x + 0.5" :y1="c.high" :y2="c.low" stroke="#222" />
            <rect :x="c.x - 1.5" :y="c.top + 0.5" width="4" :height="c.h" :fill="c.fill" stroke="#111" />
          </g>
          <path d="M23 472L402 375L409 473L893 52" fill="none" stroke="#6d9df8" />
          <g stroke="#000" stroke-width="2" stroke-dasharray="0 4.500" stroke-linecap="round">
            <path d="M978 105L1284 374M1520 374L1565 340" />
          </g>
          <path d="M1290 379L1284 368L1279 375z" stroke="#000" />
          <g v-for="l in levels" :key="'t' + l.text">
            <rect x="451.500" :y="l.y - 12.5" width="37" height="12" fill="#fff" fill-opacity=".75" :stroke="l.color" />
            <text x="453" :y="l.y - 3" :fill="l.color">{{ l.text }}</text>
          </g>
          <text v-for="(t, i) in smallTexts" :key="'s' + i" :x="t.x" :y="t.y" :fill="t.color">{{ t.text }}</text>
          <g class="wave" v-for="w in waves" :key="w.text">
            <rect :x="w.x + 0.5" :y="w.y + 0.5" :width="w.w" :height="w.h" rx="2" />
            <text :x="w.x + w.w / 2 + 0.5" :y="w.y + w.h / 2 + 3">{{ w.text }}</text>
          </g>
          <g class="wave big" v-for="w in bigWaves" :key="w.text">
            <rect :x="w.x + 0.5" :y="w.y + 0.5" :width="w.w" :height="w.h" rx="2" />
            <text :x="w.x + w.w / 2 + 0.5" :y="w.y + w.h / 2 + 4">{{ w.text }}</text>
          </g>
          <g class="wave square" v-for="s in squares" :key="s.text">
            <rect :x="s.x + 0.5" :y="s.y + 0.5" width="10" height="13" />
            <text :x="s.x + 5.5" :y="s.y + 11">{{ s.text }}</text>
          </g>
          <text x="25" y="531" class="credit">IT-Finance.com - Tiempo Real</text>
          <rect x="1565" y="19" width="35" height="515" fill="#fff" />
          <path d="M1565.500 19V534M23 533.500H1600" class="frame" />
          <g v-for="p in prices" :key="p.text">
            <path :d="`M1565 ${p.y + 0.5}h4`" class="frame" />
            <text x="1571" :y="p.y + 3" fill="#222">{{ p.text }}</text>
          </g>
          <g v-for="t in priceTags" :key="t.text">
            <path :d="`M1565 ${t.y + 0.5}h4`" :stroke="t.color" />
            <rect x="1569.500" :y="t.y - 5.5" width="34" height="11" fill="#fff" stroke="#8499a2" />
            <text x="1571" :y="t.y + 3" :fill="t.color">{{ t.text }}</text>
          </g>
        </svg>
        <div class="legend">
          <span class="cell"><svg width="31" height="9" viewBox="0 0 31 9"><rect x=".5" y=".5" width="7" height="8" fill="#fff" stroke="#bbb" /><path d="M4 1v5M1.500 4L4 7l2.500-3" stroke="#e02020" stroke-width="1.500" fill="none" /><rect x="12.500" y=".5" width="7" height="8" fill="#fff" stroke="#bbb" /><path d="M16 8V3M13.500 5L16 2l2.500 3" stroke="#12b012" stroke-width="1.500" fill="none" /><circle cx="26.500" cy="4.500" r="4" fill="#44688c" /><path d="M25 3l3 3M28 3l-3 3" stroke="#fff" /></svg></span>
          <label class="cell"><input type="checkbox" />Precio</label>
          <span class="cell"><svg width="9" height="8" viewBox="0 0 9 8"><path d="M0 1h2M3 1h5M0 4h2M3 4h5M0 7h2M3 7h5" stroke="#333" /></svg></span>
          <label class="cell"><input type="checkbox" />Cierre (W)</label>
          <span class="cell"><i class="swatch"></i>Tunel Domenec v4 (t t t t t)</span>
          <span class="cell"><i class="swatch stripes"></i>Control Total Doc v.6</span>
        </div>
        <div class="heading">
          <h1>SPTRD, M</h1>
          <h2>EEUU 500 Cash (1€)</h2>
        </div>
      </section>

      <section class="pane trains">
        <svg class="plot" viewBox="23 534 1577 112" preserveAspectRatio="none">
          <g class="gridlines">
            <line v-for="y in years" :key="y.text" :x1="y.x" :x2="y.x" y1="534" y2="645" />
            <path d="M23 562.500H1565M23 582.500H1565M23 601.500H1565M23 621.500H1565" />
          </g>
          <rect x="23" y="544" width="886" height="18" fill="#d6f6d6" />
          <polygon :points="trainBase" fill="#7fc07f" />
          <polygon :points="trainGap" fill="#f0a0f0" opacity=".5" />
          <rect x="23" y="622" width="886" height="18" fill="#ffdada" />
          <path d="M23 543.500H909M23 562.500H909M23 621.500H909M23 640.500H909" stroke="#222" />
          <path d="M23 591.500H909" stroke="#1c1ca8" stroke-width="1.500" stroke-dasharray="4 3" />
          <polygon v-for="(f, i) in quickFills" :key="'f' + i" :points="f.points" :fill="f.c === 'r' ? '#ffb4b4' : '#c8f4c8'" opacity=".8" />
          <polyline :points="path(lagged)" fill="none" stroke="#333" stroke-dasharray="2 2" />
          <polyline v-for="(r, i) in runs(quick)" :key="'q' + i" :points="r.points" fill="none" :stroke="r.c === 'r' ? '#e02020' : '#000'" stroke-width="1.400" />
          <polyline :points="path(trainSlow)" fill="none" stroke="#111" stroke-width="2" stroke-dasharray="4 3" />
          <polyline v-for="(r, i) in runs(train)" :key="'t' + i" :points="r.points" fill="none" :stroke="trainColors[r.c]" stroke-width="3" />
          <polygon v-for="(p, i) in trainUps" :key="'u' + i" :points="up(p)" fill="#0808b8" />
          <polygon v-for="(p, i) in trainDowns" :key="'d' + i" :points="down(p)" fill="#b80808" />
          <path d="M1565.500 534V646M23 645.500H1600" class="frame" />
          <g v-for="(t, i) in studyTags[0]" :key="'a' + i">
            <path :d="`M1565 ${t.y + 0.5}h4`" :stroke="t.color" />
            <rect v-if="t.box" x="1569.500" :y="t.y - 4.5" :width="tagWidth(t.text)" height="9" fill="#fff" stroke="#8499a2" />
            <text x="1571" :y="t.y + 3" :fill="t.color">{{ t.text }}</text>
          </g>
        </svg>
        <div class="legend"><span class="cell"><i class="close">×</i></span><span class="cell"><i class="swatch half"></i>Sistema de trenes Doc v4 (f f)</span></div>
      </section>

      <section class="pane willy">
        <svg class="plot" viewBox="23 646 1577 67" preserveAspectRatio="none">
          <g class="gridlines">
            <line v-for="y in years" :key="y.text" :x1="y.x" :x2="y.x" y1="646" y2="712" />
            <path d="M23 675.500H1565M23 687.500H1565M23 699.500H1565" />
          </g>
          <rect v-for="(s, i) in willySpans" :key="i" :x="s.x" y="646" :width="s.w" height="67" :fill="spanColors[s.c]" />
          <polygon :points="willyFill" fill="#3cb43c" opacity=".5" />
          <path d="M23 651.500H909M23 710.500H909" stroke="#222" stroke-dasharray="4 3" />
          <path d="M23 681H909" stroke="#1c1ca8" stroke-width="1.500" stroke-dasharray="4 3" />
          <path d="M23 667H909" stroke="#0000a0" stroke-width="1.500" />
          <path d="M23 696H909" stroke="#c81414" stroke-width="2" />
          <polyline v-for="(r, i) in runs(willy)" :key="'w' + i" :points="r.points" fill="none" :stroke="willyColors[r.c]" stroke-width="2.500" />
          <polygon points="398,676 408,676 403,686" fill="#b80808" />
          <polygon points="404,686 414,686 409,677" fill="#0808b8" />
          <path d="M1565.500 646V713M23 712.500H1600" class="frame" />
          <g v-for="(t, i) in studyTags[1]" :key="'a' + i">
            <path :d="`M1565 ${t.y + 0.5}h4`" :stroke="t.color" />
            <rect v-if="t.box" x="1569.500" :y="t.y - 4.5" :width="tagWidth(t.text)" height="9" fill="#fff" stroke="#8499a2" />
            <text x="1571" :y="t.y + 3" :fill="t.color">{{ t.text }}</text>
          </g>
        </svg>
        <div class="legend"><span class="cell"><i class="close">×</i></span><span class="cell"><i class="swatch"></i>Willy Doc (t)</span></div>
      </section>

      <section class="pane awesome">
        <svg class="plot" viewBox="23 713 1577 72" preserveAspectRatio="none">
          <g class="gridlines">
            <line v-for="y in years" :key="y.text" :x1="y.x" :x2="y.x" y1="713" y2="784" />
            <path d="M23 729.500H1565M23 746.500H1565M23 779.500H1565" />
          </g>
          <g v-for="(b, i) in bars" :key="i">
            <rect v-if="b.gapH > 1" :x="b.x" :y="b.gapY" width="6" :height="b.gapH" :fill="b.gapFill" :stroke="b.gapLine" stroke-width=".5" />
            <rect :x="b.x" :y="b.y" width="5" :height="b.h" :fill="b.fill" />
          </g>
          <path d="M23 763H909" stroke="#1c1cff" stroke-width="1.500" />
          <polyline v-for="(r, i) in runs(osc)" :key="'o' + i" :points="r.points" fill="none" :stroke="oscColors[r.c]" stroke-width="2.500" />
          <polyline v-for="(r, i) in runs(signal)" :key="'s' + i" :points="r.points" fill="none" :stroke="oscColors[r.c]" stroke-width="2.500" />
          <polygon v-for="(p, i) in oscUps" :key="'u' + i" :points="up(p)" fill="#00f0f0" />
          <polygon v-for="(p, i) in oscDowns" :key="'d' + i" :points="down(p)" fill="#f0f000" />
          <path d="M1565.500 713V785M23 784.500H1600" class="frame" />
          <g v-for="(t, i) in studyTags[2]" :key="'a' + i">
            <path :d="`M1565 ${t.y + 0.5}h4`" :stroke="t.color" />
            <rect v-if="t.box" x="1569.500" :y="t.y - 4.5" :width="tagWidth(t.text)" height="9" fill="#fff" stroke="#8499a2" />
            <text x="1571" :y="t.y + 3" :fill="t.color">{{ t.text }}</text>
          </g>
        </svg>
        <div class="legend"><span class="cell"><i class="close">×</i></span><span class="cell"><i class="swatch"></i>Awesome Evolution Doc</span></div>
      </section>

      <section class="pane force">
        <svg class="plot" viewBox="23 785 1577 46" preserveAspectRatio="none">
          <g class="gridlines">
            <line v-for="y in years" :key="y.text" :x1="y.x" :x2="y.x" y1="785" y2="830" />
            <path d="M23 800.500H1565M23 815.500H1565" />
          </g>
          <rect x="23" y="785" width="889" height="46" fill="#b0f0fd" />
          <rect v-for="(s, i) in forceSpans" :key="i" :x="s.x" y="785" :width="s.w" height="46" :fill="forceColors[s.c]" />
          <rect v-for="(b, i) in forceBars" :key="'b' + i" :x="b.x + 0.5" :y="b.y + 0.5" width="6" :height="831 - b.y" :fill="b.c === 'b' ? '#1212d8' : '#e02030'" :fill-opacity="b.c === 'b' ? 0.75 : 0.55" :stroke="b.c === 'b' ? '#1a1a9c' : '#b02030'" stroke-opacity=".8" />
          <path d="M1565.500 785V831M23 830.500H1565" class="frame" />
          <g v-for="(t, i) in studyTags[3]" :key="'a' + i">
            <path :d="`M1565 ${t.y + 0.5}h4`" :stroke="t.color" />
            <rect v-if="t.box" x="1569.500" :y="t.y - 4.5" :width="tagWidth(t.text)" height="9" fill="#fff" stroke="#8499a2" />
            <text x="1571" :y="t.y + 3" :fill="t.color">{{ t.text }}</text>
          </g>
        </svg>
        <div class="legend"><span class="cell"><i class="close">×</i></span><span class="cell"><i class="swatch half"></i>Barra Fuerza Fondo Mercado v4 (f)</span></div>
      </section>

      <section class="pane dates">
        <svg class="plot" viewBox="23 831 1577 12" preserveAspectRatio="none">
          <g v-for="y in years" :key="y.text">
            <path :d="`M${y.x + 0.5} 831v2`" class="frame" />
            <text :x="y.x" y="842" text-anchor="middle" fill="#222">{{ y.text }}</text>
          </g>
          <path d="M1561.500 831v2" class="frame" />
        </svg>
      </section>

      <footer class="bottombar">
        <button v-for="t in leftFoot" :key="t.name" class="foot" :aria-label="t.name"><svg width="13" height="13" viewBox="0 0 14 14" fill="none" v-html="t.art"></svg></button>
        <button class="collapse">«</button>
        <div class="scrollbar">
          <button class="nudge" aria-label="Izquierda"><svg viewBox="0 0 4 6"><path d="M3 1L1 3l2 2" /></svg></button>
          <div class="track"><div class="thumb"></div></div>
          <button class="nudge" aria-label="Derecha"><svg viewBox="0 0 4 6"><path d="M1 1l2 2-2 2" /></svg></button>
        </div>
        <button v-for="t in rightFoot" :key="t.name" class="foot" :aria-label="t.name"><svg width="13" height="13" viewBox="0 0 14 14" fill="none" v-html="t.art"></svg></button>
      </footer>
    </main>
  </div>
</template>

<style>
html, body { margin: 0; background: #fff; }
</style>

<style scoped>
.platform {
  display: grid;
  grid-template: 19px minmax(0, 1fr) / 23px minmax(0, 1fr);
  height: 100vh;
  overflow: hidden;
  font: bold 8px/10px "Liberation Sans", Arial, sans-serif;
  color: #111;
}
button { margin: 0; padding: 0; border: 0; background: none; font: inherit; color: inherit; display: flex; align-items: center; justify-content: center; }
svg { display: block; flex: none; }
.chev { width: 6px; height: 4px; fill: none; stroke: #222; stroke-width: 1; }

.topbar {
  grid-column: 1 / -1;
  display: flex;
  align-items: stretch;
  background: linear-gradient(#a6c4d1 0, #b4d4e1 3px, #9dbccb 18px);
  border-bottom: 1px solid #46606d;
  box-sizing: border-box;
  white-space: nowrap;
}
.logo { width: 20px; }
.grip { margin: 3px 1px 0 2px; }
.drop { box-sizing: border-box; padding: 0 4px 0 3px; border-right: 1px solid #839ca8; justify-content: space-between; }
.symbol { width: 45px; margin-left: 3px; border-left: 1px solid #839ca8; }
.month { width: 37px; }
.amount { width: 70px; }
.indicators { width: 71px; padding-right: 2px; }
.more { width: 11px; padding: 0 2px; }
.group { box-sizing: border-box; display: flex; align-items: center; justify-content: space-between; border-right: 1px solid #839ca8; padding: 0 2px 0 3px; }
.times { width: 201px; }
.units { width: 78px; padding-left: 4px; }
.chip { height: 13px; padding: 0 1px; border: 1px solid #86a3b0; border-radius: 2px; background: #b6d6e2; min-width: 8px; }
.chip.on { background: #8ca5b1; border-color: #78919d; }
.status { flex: 1; display: flex; align-items: center; gap: 3px; padding-left: 6px; }
.info { width: 8px; height: 8px; border: 1px solid #8c9aa0; background: #dbe3e6; color: #666; }
.dot { width: 6px; height: 6px; border-radius: 3px; background: #6c7c84; margin: 0 1px 0 3px; }
.change { background: #f14b4b; color: #fff; border-radius: 2px; padding: 1px 2px; font-weight: normal; }
.product { background: #c5d6ae; border: 1px solid #b0c296; border-radius: 3px; padding: 0 2px; font-weight: normal; }
.sync { width: 19px; border-left: 1px solid #839ca8; padding: 0 2px; }
.window { width: 36px; display: flex; align-items: center; justify-content: space-around; }
.window svg { width: 8px; height: 8px; fill: none; stroke: #728994; stroke-width: 1; }

.sidebar {
  display: flex;
  flex-direction: column;
  background: #9ab7c5;
  border-right: 1px solid #6f8a97;
  border-left: 1px solid #5f7a87;
  box-sizing: border-box;
  min-height: 0;
}
.scroll { height: 9px; flex: none; border-bottom: 1px solid #7b95a2; }
.scroll.down { height: 8px; background: #b6d4e0; border-top: 1px solid #7b95a2; box-sizing: border-box; }
.tools { flex: 1; min-height: 0; display: flex; flex-direction: column; }
.tool { flex: 1; min-height: 0; box-sizing: border-box; border: 1px solid transparent; }
.picked { background: #8fa7b2; border-color: #7b929e; border-radius: 2px; }
.peek { height: 6px; flex: none; overflow: hidden; display: flex; justify-content: center; }
.tall { flex: 0 0 23px; }
.pencil { flex: 0 0 18px; background: #89a3b0; border-top-color: #6f8a97; }

.work { display: flex; flex-direction: column; min-width: 0; min-height: 0; }
.pane { position: relative; min-height: 0; overflow: hidden; background: #fff; }
.price { flex: 515 1 0; }
.trains { flex: 112 1 0; }
.willy { flex: 67 1 0; }
.awesome { flex: 72 1 0; }
.force { flex: 46 1 0; }
.dates { flex: 12 1 0; }
.plot { width: 100%; height: 100%; }
.plot text { font: bold 8px "Liberation Sans", Arial, sans-serif; }
.plot .credit { font-weight: normal; fill: #111; }
.gridlines { stroke: #e6e6e6; stroke-dasharray: 1 2; }
.frame { stroke: #8198a2; fill: none; }
.plot .wave rect { fill: #fff; fill-opacity: .5; stroke: #6d9df8; }
.plot .wave text { font-weight: normal; text-anchor: middle; fill: #222; }
.plot .big text { font-size: 11px; }
.plot .square text { font-size: 10px; fill: #6d9df8; font-weight: bold; }

.legend { position: absolute; left: 0; top: 0; display: flex; height: 12px; border: 1px solid #8ba0aa; border-left: 0; border-top: 0; background: #cbdbe2; white-space: nowrap; }
.price .legend { top: 1px; }
.cell { display: flex; align-items: center; gap: 3px; padding: 0 2px; border-left: 1px solid #9cb0b9; }
.cell:first-child { border-left: 0; }
.cell input { appearance: none; width: 7px; height: 7px; margin: 0 1px; border: 1px solid #8a979c; background: #edf1f3; }
.swatch { width: 7px; height: 7px; background: #71858e; }
.stripes { background: linear-gradient(90deg, #111 0 2px, #20d020 2px 3px, #e010e0 3px 5px, #111 5px 7px); }
.half { background: linear-gradient(90deg, #71858e 0 3px, #000 3px 7px); }
.close { width: 9px; height: 9px; border-radius: 5px; background: #44688c; color: #fff; font-style: normal; text-align: center; line-height: 9px; }
.heading { position: absolute; left: 9px; top: 13px; color: #000; }
.heading h1 { margin: 0; font-size: 32px; line-height: 36px; }
.heading h2 { margin: 0; font-size: 20px; line-height: 24px; }

.bottombar { flex: 0 0 18px; display: flex; align-items: center; background: #9ab7c5; border-top: 2px solid #7f99a6; box-sizing: border-box; }
.foot { width: 18px; height: 14px; flex: none; }
.bottombar .foot:last-child { width: 16px; }
.collapse { width: 9px; height: 12px; font-size: 11px; font-weight: normal; }
.scrollbar { flex: 1; display: flex; height: 12px; margin: 0 3px 0 2px; }
.nudge { width: 11px; border: 1px solid #7994a1; background: #b4d2df; box-sizing: border-box; }
.nudge svg { width: 4px; height: 6px; fill: none; stroke: #111; }
.track { flex: 1; background: #94b0bd; border: 1px solid #7994a1; border-width: 1px 0; box-sizing: border-box; display: flex; justify-content: flex-end; padding-right: 10px; }
.thumb { width: 29%; background: linear-gradient(#b9d8e4, #a4c4d1); border: 1px solid #7994a1; border-width: 0 1px; }
</style>
